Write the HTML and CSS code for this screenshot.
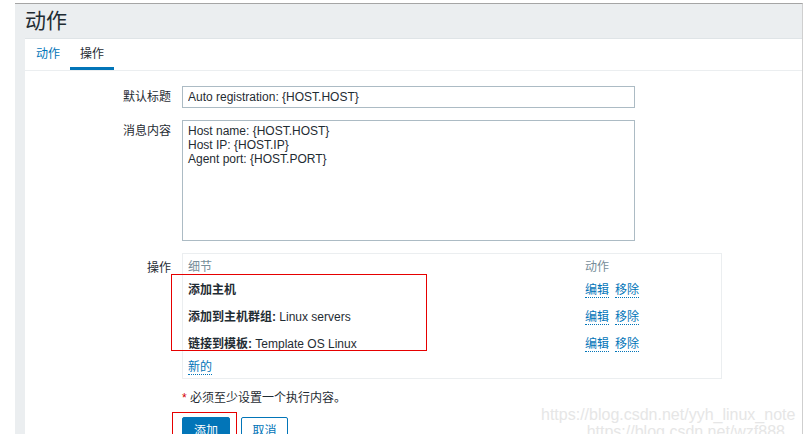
FILE: index.html
```html
<!DOCTYPE html>
<html>
  <head>
    <title>动作</title>
    <link rel="stylesheet" href="styles.css">
  </head>
  <body>
    <div class="page">
      <h1>动作</h1>
      <div class="panel">
        <ul class="tabs">
          <li class="tab">动作</li>
          <li class="tab active">操作</li>
        </ul>
        <div class="form">
          <label class="form-label">默认标题</label>
          <div class="field">
            <input class="text-input" type="text" value="Auto registration: {HOST.HOST}">
          </div>

          <label class="form-label label-top">消息内容</label>
          <div class="field">
            <textarea class="text-area">Host name: {HOST.HOST}
Host IP: {HOST.IP}
Agent port: {HOST.PORT}</textarea>
          </div>

          <label class="form-label label-ops">操作</label>
          <div class="field">
            <div class="ops">
              <div class="ops-row ops-head">
                <span class="col-detail">细节</span>
                <span class="col-action">动作</span>
              </div>
              <div class="ops-row row-1">
                <span class="col-detail"><b>添加主机</b></span>
                <span class="col-action"><a class="link">编辑</a><a class="link">移除</a></span>
              </div>
              <div class="ops-row row-2">
                <span class="col-detail"><b>添加到主机群组:</b> Linux servers</span>
                <span class="col-action"><a class="link">编辑</a><a class="link">移除</a></span>
              </div>
              <div class="ops-row row-3">
                <span class="col-detail"><b>链接到模板:</b> Template OS Linux</span>
                <span class="col-action"><a class="link">编辑</a><a class="link">移除</a></span>
              </div>
              <div class="ops-row row-new">
                <span class="col-detail"><a class="link">新的</a></span>
              </div>
              <div class="mark mark-ops"></div>
            </div>

            <p class="required"><span class="star">*</span> 必须至少设置一个执行内容。</p>

            <div class="buttons">
              <button class="btn btn-primary">添加</button>
              <button class="btn btn-alt">取消</button>
              <div class="mark mark-btn"></div>
            </div>
          </div>
        </div>
      </div>
    </div>
    <div class="watermark">
      <div>https://blog.csdn.net/yyh_linux_note</div>
      <div class="wm-2">https://blog.csdn.net/wzf888</div>
    </div>
  </body>
</html>
```

FILE: styles.css
```css
html,
body {
  margin: 0;
  height: 434px;
  overflow: hidden;
  background-color: #fff;
  font-family: "Liberation Sans", Arial, "Noto Sans CJK SC", sans-serif;
  font-size: 12px;
  color: #1f2c33;
}

.page {
  margin: 3px 0 0 15px;
  height: 431px;
  box-sizing: border-box;
  border-top: 1px solid #a5a5a5;
  border-right: 1px solid #cfcfcf;
  background-color: #ebeef0;
  padding-left: 10px;
}

h1 {
  margin: 0;
  height: 34px;
  line-height: 34px;
  font-size: 21px;
  font-weight: normal;
  color: #1f2c33;
}

.panel {
  background-color: #fff;
  border-top: 1px solid #dfe4e7;
  height: 400px;
}

/* tabs */
.tabs {
  list-style: none;
  margin: 0;
  padding: 0 0 0 1px;
  display: flex;
  height: 31px;
  border-bottom: 1px solid #ebeef0;
}

.tab {
  padding: 0 10px;
  height: 31px;
  line-height: 30px;
  box-sizing: border-box;
  color: #0275b8;
}

.tab.active {
  color: #1f2c33;
  border-bottom: 3px solid #0275b8;
}

/* form grid */
.form {
  display: grid;
  grid-template-columns: 146px 1fr;
  column-gap: 11px;
  row-gap: 12px;
  padding-top: 15px;
}

.form-label {
  text-align: right;
  line-height: 22px;
}

.label-top {
  line-height: 22px;
}

.label-ops {
  padding-top: 4px;
}

.text-input,
.text-area {
  display: block;
  width: 453px;
  box-sizing: border-box;
  border: 1px solid #acbbc4;
  font-family: "Liberation Sans", Arial, "Noto Sans CJK SC", sans-serif;
  font-size: 12px;
  color: #1f2c33;
  margin: 0;
}

.text-input {
  height: 22px;
  padding: 0 5px;
}

.text-area {
  height: 121px;
  padding: 3px 5px;
  line-height: 14px;
  resize: none;
}

/* operations list */
.ops {
  position: relative;
  width: 540px;
  box-sizing: border-box;
  border: 1px solid #ebeef0;
  padding: 0 5px 3px;
}

.ops-row {
  display: flex;
  align-items: center;
}

.ops-head {
  height: 23px;
  color: #768d99;
}

.row-1 {
  height: 22px;
}

.row-2 {
  height: 26px;
  margin-top: 3px;
}

.row-3 {
  height: 26px;
  margin-top: 1px;
}

.row-new {
  height: 20px;
}

.col-detail {
  width: 397px;
}

.col-action .link {
  margin-right: 6px;
}

.link {
  color: #0275b8;
  border-bottom: 1px dotted #0275b8;
  cursor: pointer;
}

/* red highlight boxes from the screenshot */
.mark {
  position: absolute;
  border: 1px solid #e60000;
  pointer-events: none;
}

.mark-ops {
  left: -12px;
  top: 20px;
  width: 254px;
  height: 75px;
}

.required {
  margin: 12px 0 0;
  line-height: 14px;
}

.star {
  color: #d40000;
}

.buttons {
  position: relative;
  display: flex;
  gap: 11px;
  margin-top: 12px;
}

.btn {
  height: 24px;
  padding: 0;
  font-family: "Liberation Sans", Arial, "Noto Sans CJK SC", sans-serif;
  font-size: 12px;
  border: 1px solid #0275b8;
  border-radius: 2px;
  cursor: pointer;
}

.btn-primary {
  width: 48px;
  background-color: #0275b8;
  color: #fff;
}

.btn-alt {
  width: 47px;
  background-color: #fff;
  color: #0275b8;
}

.mark-btn {
  left: -10px;
  top: -5px;
  width: 63px;
  height: 30px;
}

.watermark {
  position: absolute;
  left: 541px;
  top: 406px;
  font-family: "Liberation Sans", Arial, sans-serif;
  font-size: 16px;
  line-height: 17px;
  color: #e6e6e6;
  text-align: right;
  width: 252px;
}

.wm-2 {
  padding-right: 8px;
}
```
